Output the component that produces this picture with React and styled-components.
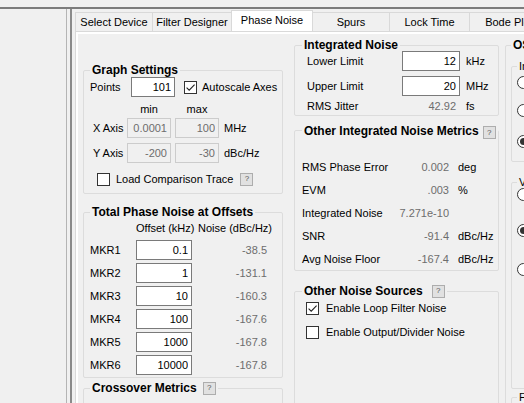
import React from "react";
import styled, { createGlobalStyle } from "styled-components";

const GlobalStyle = createGlobalStyle`
  * { box-sizing: border-box; }
  html, body { margin: 0; padding: 0; background: #f0f0f0; }
  body {
    font-family: "Liberation Sans", Arial, sans-serif;
    font-size: 11px;
    color: #000;
    overflow: hidden;
  }
`;

const Window = styled.div`
  width: 524px;
  height: 403px;
  display: flex;
  flex-direction: column;
  overflow: hidden;
  background: #f0f0f0;
`;

const TopRule = styled.div`
  flex: none;
  height: 9px;
  border-bottom: 2px solid #7c7c7c;
`;

const Main = styled.div`
  flex: 1;
  min-height: 0;
  display: flex;
`;

const SidePane = styled.div`
  flex: none;
  width: 67px;
  margin-right: 3px;
  border-right: 1px solid #b4b4b4;
`;

const TabArea = styled.div`
  flex: 1;
  min-width: 0;
  display: flex;
  flex-direction: column;
  padding: 1px 0 0 3px;
  border-left: 2px solid #8a8a8a;
`;

const TabStrip = styled.div`
  flex: none;
  height: 21px;
  display: flex;
  align-items: flex-end;
  overflow: hidden;
`;

const Tab = styled.div`
  flex: none;
  width: ${(p) => p.$w}px;
  height: ${(p) => (p.$active ? 22 : 19)}px;
  margin-left: -1px;
  margin-bottom: ${(p) => (p.$active ? -1 : 0)}px;
  position: relative;
  z-index: ${(p) => (p.$active ? 1 : 0)};
  border: 1px solid #d9d9d9;
  border-bottom: none;
  background: ${(p) => (p.$active ? "#fff" : "#f0f0f0")};
  display: flex;
  justify-content: center;
  padding-top: 3px;
  white-space: nowrap;
  line-height: 13px;
  &:first-child { margin-left: 0; }
`;

const Page = styled.div`
  flex: 1;
  min-height: 0;
  display: flex;
  border: 1px solid #d9d9d9;
  border-right: none;
  border-bottom: none;
  background: #fff;
  padding: 2px 0 0 2px;
`;

const Content = styled.div`
  flex: 1;
  display: flex;
  background: #f0f0f0;
  padding: 4px 0 0 5px;
  overflow: hidden;
`;

const Column = styled.div`
  flex: none;
  width: ${(p) => p.$w}px;
  margin-left: ${(p) => p.$ml || 0}px;
  padding-top: ${(p) => p.$pt || 0}px;
  display: flex;
  flex-direction: column;
`;

const Group = styled.fieldset`
  margin: ${(p) => p.$mt || 0}px 0 0 0;
  padding: 0 ${(p) => p.$px ?? 6}px ${(p) => p.$pb ?? 6}px;
  border: 1px solid #dcdcdc;
  border-radius: 2px;
  min-width: 0;
  min-height: ${(p) => p.$minH || 0}px;
  flex: none;
`;

const Legend = styled.legend`
  padding: 0 2px;
  margin-left: ${(p) => p.$ml || 0}px;
  line-height: 14px;
  height: 14px;
  font-size: ${(p) => (p.$light ? 11 : 12)}px;
  font-weight: ${(p) => (p.$light ? 400 : 700)};
  white-space: nowrap;
`;

const LegendInner = styled.span`
  display: inline-flex;
  align-items: center;
  gap: ${(p) => p.$gap || 6}px;
`;

const Row = styled.div`
  display: flex;
  align-items: center;
  height: ${(p) => p.$h || 14}px;
  margin-top: ${(p) => p.$mt || 0}px;
  padding-left: ${(p) => p.$pl || 0}px;
  white-space: nowrap;
`;

const Label = styled.span`
  flex: none;
  width: ${(p) => (p.$w ? `${p.$w}px` : "auto")};
  padding-left: ${(p) => p.$pl || 0}px;
  text-align: ${(p) => p.$align || "left"};
  margin-left: ${(p) => p.$ml || 0}px;
`;

const Value = styled.span`
  flex: none;
  width: ${(p) => p.$w}px;
  text-align: right;
  padding-right: ${(p) => p.$pr || 0}px;
  color: #6d6d6d;
`;

const TextBox = styled.input`
  flex: none;
  width: ${(p) => p.$w}px;
  height: ${(p) => p.$h || 20}px;
  margin: 0 0 0 ${(p) => p.$ml || 0}px;
  padding: 0 3px;
  border: 1px solid ${(p) => (p.disabled ? "#cccccc" : "#7a7a7a")};
  background: ${(p) => (p.disabled ? "#f0f0f0" : "#fff")};
  color: ${(p) => (p.disabled ? "#6d6d6d" : "#000")};
  font: inherit;
  font-size: 11px;
  text-align: right;
  outline: none;
`;

const BoxMark = styled.span`
  flex: none;
  width: 13px;
  height: 13px;
  border: 1px solid #333;
  background: #fff;
  display: inline-flex;
  align-items: center;
  justify-content: center;
  margin-left: ${(p) => p.$ml || 0}px;
`;

const RadioMark = styled.span`
  flex: none;
  width: 13px;
  height: 13px;
  border-radius: 50%;
  border: 1px solid #333;
  background: #fff;
  display: inline-flex;
  align-items: center;
  justify-content: center;
  &::after {
    content: "";
    width: 7px;
    height: 7px;
    border-radius: 50%;
    background: #333;
    display: ${(p) => (p.$on ? "block" : "none")};
  }
`;

const Help = styled.span`
  flex: none;
  width: 13px;
  height: 13px;
  border: 1px solid #adadad;
  background: #e1e1e1;
  display: inline-flex;
  align-items: center;
  justify-content: center;
  font-size: 8px;
  font-weight: 400;
  color: #555;
  line-height: 1;
  margin-left: ${(p) => p.$ml || 0}px;
  margin-top: ${(p) => p.$dy || 0}px;
`;

const MarkerGrid = styled.div`
  display: grid;
  grid-template-columns: 46px 56px 80px;
  grid-template-rows: 16px;
  grid-auto-rows: 20px;
  row-gap: 3px;
  align-items: center;
  margin-top: 2px;
`;

const HeadCell = styled.span`
  align-self: start;
  line-height: 14px;
  text-align: ${(p) => p.$align || "left"};
  white-space: nowrap;
`;

const NoiseCell = styled.span`
  text-align: right;
  padding-right: 5px;
  color: #6d6d6d;
`;

function Check({ checked, ml }) {
  return (
    <BoxMark $ml={ml}>
      {checked && (
        <svg width="11" height="11" viewBox="0 0 11 11">
          <path d="M1.6 5.6 L4.2 8.2 L9.6 2.6" fill="none" stroke="#222" strokeWidth="1.1" />
        </svg>
      )}
    </BoxMark>
  );
}

const tabs = [
  ["Select Device", 78],
  ["Filter Designer", 80],
  ["Phase Noise", 82],
  ["Spurs", 78],
  ["Lock Time", 81],
  ["Bode Plot", 80],
];

const markers = [
  ["MKR1", "0.1", "-38.5"],
  ["MKR2", "1", "-131.1"],
  ["MKR3", "10", "-160.3"],
  ["MKR4", "100", "-167.6"],
  ["MKR5", "1000", "-167.8"],
  ["MKR6", "10000", "-167.8"],
];

const metrics = [
  ["RMS Phase Error", "0.002", "deg"],
  ["EVM", ".003", "%"],
  ["Integrated Noise", "7.271e-10", ""],
  ["SNR", "-91.4", "dBc/Hz"],
  ["Avg Noise Floor", "-167.4", "dBc/Hz"],
];

export default function App() {
  return (
    <>
      <GlobalStyle />
      <Window>
        <TopRule />
        <Main>
          <SidePane />
          <TabArea>
            <TabStrip>
              {tabs.map(([name, w]) => (
                <Tab key={name} $w={w} $active={name === "Phase Noise"}>
                  {name}
                </Tab>
              ))}
            </TabStrip>
            <Page>
              <Content>
                <Column $w={200} $pt={25}>
                  <Group $pb={7}>
                    <Legend>Graph Settings</Legend>
                    <Row $h={20}>
                      <Label $w={41}>Points</Label>
                      <TextBox $w={44} defaultValue="101" />
                      <Check checked ml={9} />
                      <Label $ml={5}>Autoscale Axes</Label>
                    </Row>
                    <Row $mt={5}>
                      <Label $w={37} />
                      <Label $w={44} $align="center">min</Label>
                      <Label $w={44} $ml={4} $align="center">max</Label>
                    </Row>
                    <Row $h={20} $mt={2}>
                      <Label $w={37} $pl={3}>X Axis</Label>
                      <TextBox $w={44} disabled defaultValue="0.0001" />
                      <TextBox $w={44} $ml={4} disabled defaultValue="100" />
                      <Label $ml={5}>MHz</Label>
                    </Row>
                    <Row $h={20} $mt={5}>
                      <Label $w={37} $pl={3}>Y Axis</Label>
                      <TextBox $w={44} disabled defaultValue="-200" />
                      <TextBox $w={44} $ml={4} disabled defaultValue="-30" />
                      <Label $ml={5}>dBc/Hz</Label>
                    </Row>
                    <Row $mt={9} $pl={7}>
                      <Check />
                      <Label $ml={6}>Load Comparison Trace</Label>
                      <Help $ml={7}>?</Help>
                    </Row>
                  </Group>

                  <Group $mt={11} $pb={2}>
                    <Legend>Total Phase Noise at Offsets</Legend>
                    <MarkerGrid>
                      <HeadCell />
                      <HeadCell $align="center">Offset (kHz)</HeadCell>
                      <HeadCell $align="right">Noise (dBc/Hz)</HeadCell>
                      {markers.map(([m, off, noise]) => (
                        <React.Fragment key={m}>
                          <span>{m}</span>
                          <TextBox $w={56} $h={20} defaultValue={off} />
                          <NoiseCell>{noise}</NoiseCell>
                        </React.Fragment>
                      ))}
                    </MarkerGrid>
                  </Group>

                  <Group $mt={3} $minH={40}>
                    <Legend>
                      <LegendInner $gap={6}>
                        Crossover Metrics
                        <Help>?</Help>
                      </LegendInner>
                    </Legend>
                  </Group>
                </Column>

                <Column $w={205} $ml={11}>
                  <Group $px={7} $pb={2}>
                    <Legend>Integrated Noise</Legend>
                    <Row $h={20} $mt={-1} $pl={5}>
                      <Label $w={95}>Lower Limit</Label>
                      <TextBox $w={58} defaultValue="12" />
                      <Label $ml={6}>kHz</Label>
                    </Row>
                    <Row $h={20} $mt={5} $pl={5}>
                      <Label $w={95}>Upper Limit</Label>
                      <TextBox $w={58} defaultValue="20" />
                      <Label $ml={6}>MHz</Label>
                    </Row>
                    <Row $mt={3} $pl={5}>
                      <Label $w={95}>RMS Jitter</Label>
                      <Value $w={58} $pr={4}>42.92</Value>
                      <Label $ml={6}>fs</Label>
                    </Row>
                  </Group>

                  <Group $mt={7} $px={7} $pb={4}>
                    <Legend>
                      <LegendInner $gap={4}>
                        Other Integrated Noise Metrics
                        <Help $dy={3}>?</Help>
                      </LegendInner>
                    </Legend>
                    {metrics.map(([name, val, unit], i) => (
                      <Row key={name} $mt={i === 0 ? 23 : 9}>
                        <Label $w={95}>{name}</Label>
                        <Value $w={52}>{val}</Value>
                        <Label $ml={9}>{unit}</Label>
                      </Row>
                    ))}
                  </Group>

                  <Group $mt={13} $px={7} $minH={140}>
                    <Legend>
                      <LegendInner $gap={9}>
                        Other Noise Sources
                        <Help>?</Help>
                      </LegendInner>
                    </Legend>
                    <Row $mt={3} $pl={4}>
                      <Check checked />
                      <Label $ml={7}>Enable Loop Filter Noise</Label>
                    </Row>
                    <Row $mt={10} $pl={4}>
                      <Check />
                      <Label $ml={7}>Enable Output/Divider Noise</Label>
                    </Row>
                  </Group>
                </Column>

                <Column $w={200} $ml={6}>
                  <Group $px={5} $minH={400}>
                    <Legend>OSCin Settings</Legend>
                    <Group $mt={7} $px={5} $pb={13}>
                      <Legend $light>Input Type</Legend>
                      <Row $mt={2}>
                        <RadioMark />
                        <Label $ml={5}>Single-Ended</Label>
                      </Row>
                      <Row $mt={14}>
                        <RadioMark />
                        <Label $ml={5}>Differential</Label>
                      </Row>
                      <Row $mt={17}>
                        <RadioMark $on />
                        <Label $ml={5}>Ideal</Label>
                      </Row>
                    </Group>
                    <Group $mt={13} $px={5} $pb={112}>
                      <Legend $light>VCO Noise</Legend>
                      <Row $mt={-2}>
                        <RadioMark />
                        <Label $ml={5}>Default</Label>
                      </Row>
                      <Row $mt={22}>
                        <RadioMark $on />
                        <Label $ml={5}>Custom</Label>
                      </Row>
                      <Row $mt={25}>
                        <RadioMark />
                        <Label $ml={5}>Ideal</Label>
                      </Row>
                    </Group>
                    <Group $mt={1} $px={5} $minH={40}>
                      <Legend $light>Frequency</Legend>
                    </Group>
                  </Group>
                </Column>
              </Content>
            </Page>
          </TabArea>
        </Main>
      </Window>
    </>
  );
}
